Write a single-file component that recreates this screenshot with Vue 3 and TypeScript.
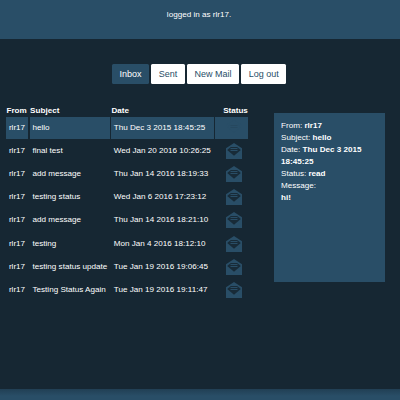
<script setup lang="ts">
import { ref, computed } from 'vue'

interface Mail {
  from: string
  subject: string
  date: string
  status: string
  body: string
}

const tabs: string[] = ['Inbox', 'Sent', 'New Mail', 'Log out']
const activeTab = ref('Inbox')
const selected = ref(0)

const mails: Mail[] = [
  ['hello', 'Thu Dec 3 2015 18:45:25'],
  ['final test', 'Wed Jan 20 2016 10:26:25'],
  ['add message', 'Thu Jan 14 2016 18:19:33'],
  ['testing status', 'Wed Jan 6 2016 17:23:12'],
  ['add message', 'Thu Jan 14 2016 18:21:10'],
  ['testing', 'Mon Jan 4 2016 18:12:10'],
  ['testing status update', 'Tue Jan 19 2016 19:06:45'],
  ['Testing Status Again', 'Tue Jan 19 2016 19:11:47'],
].map(([subject, date]) => ({ from: 'rlr17', subject, date, status: 'read', body: 'hi!' }))

const current = computed(() => mails[selected.value])
</script>

<template>
  <div class="page">
    <header class="top">logged in as rlr17.</header>
    <main class="main">
      <nav class="tabs">
        <button
          v-for="tab in tabs"
          :key="tab"
          class="tab"
          :class="{ active: tab === activeTab }"
          @click="activeTab = tab"
        >{{ tab }}</button>
      </nav>
      <div class="content">
        <section class="list">
          <div class="row head">
            <span>From</span><span>Subject</span><span>Date</span><span class="right">Status</span>
          </div>
          <div
            v-for="(mail, i) in mails"
            :key="i"
            class="row mail"
            :class="{ selected: i === selected }"
            @click="selected = i"
          >
            <span>{{ mail.from }}</span>
            <span>{{ mail.subject }}</span>
            <span>{{ mail.date }}</span>
            <span class="icon-cell">
              <svg class="icon" viewBox="0 0 16 16">
                <path class="paper" d="M0 5.2 8 0 16 5.2V16H0Z" />
                <path class="fold" d="M1.2 7 4.8 4H11.2L14.8 7 8 12.8Z" />
                <path class="lines" d="M4.5 5.5h7M4.5 7.5h7" />
              </svg>
            </span>
          </div>
        </section>
        <aside class="detail">
          <div>From: <b>{{ current.from }}</b></div>
          <div>Subject: <b>{{ current.subject }}</b></div>
          <div>Date: <b>{{ current.date }}</b></div>
          <div>Status: <b>{{ current.status }}</b></div>
          <div>Message:</div>
          <div><b>{{ current.body }}</b></div>
        </aside>
      </div>
    </main>
    <footer class="bottom"></footer>
  </div>
</template>

<style>
body {
  background: #162733;
}
</style>

<style scoped>
.page {
  box-sizing: border-box;
  width: 400px;
  height: 400px;
  display: flex;
  flex-direction: column;
  overflow: hidden;
  background: #162733;
  color: #fff;
  font: 8.1px/12px 'Liberation Sans', Arial, sans-serif;
}
.top {
  flex: none;
  box-sizing: border-box;
  height: 39px;
  padding: 9px 2px 0 0;
  text-align: center;
  background: #294e67;
}
.main {
  flex: 1;
}
.tabs {
  display: flex;
  gap: 2px;
  padding: 25px 0 0 112px;
}
.tab {
  height: 20px;
  padding: 0 7.6px;
  border: 0;
  border-radius: 1.5px;
  background: #fff;
  color: #294e67;
  font: 9px/20px 'Liberation Sans', Arial, sans-serif;
  white-space: nowrap;
}
.tab.active {
  background: #294e67;
  color: #fff;
}
.content {
  display: flex;
  align-items: flex-start;
  padding: 1px 0 0 6px;
}
.list {
  width: 242px;
  padding-top: 19.7px;
}
.row {
  display: grid;
  grid-template-columns: 22.3px 80px 103.2px 32.5px;
  column-gap: 1.3px;
}
.head {
  height: 12px;
  font-weight: bold;
  white-space: nowrap;
}
.head span {
  padding-left: 0.5px;
}
.head .right {
  display: flex;
  justify-content: flex-end;
}
.mail {
  height: 22px;
  margin-bottom: 1.2px;
  line-height: 22px;
  white-space: nowrap;
}
.mail span {
  padding-left: 2.9px;
}
.mail.selected span {
  background: #294e67;
}
.mail .icon-cell {
  display: flex;
  align-items: center;
  justify-content: center;
  padding-left: 4px;
}
.icon {
  width: 16px;
  height: 16px;
}
.paper {
  fill: #294e67;
}
.fold {
  fill: #182b38;
}
.lines {
  fill: none;
  stroke: #294e67;
  stroke-width: 1;
}
.selected .fold {
  fill: #294e67;
}
.selected .lines {
  stroke: #26485f;
}
.detail {
  box-sizing: border-box;
  width: 111px;
  height: 168.7px;
  margin: 28px 0 0 26px;
  padding: 6.5px 7px;
  background: #294e67;
  line-height: 12.1px;
}
.bottom {
  flex: none;
  height: 11px;
  background: linear-gradient(#213f54, #294e67 7px);
}
</style>
